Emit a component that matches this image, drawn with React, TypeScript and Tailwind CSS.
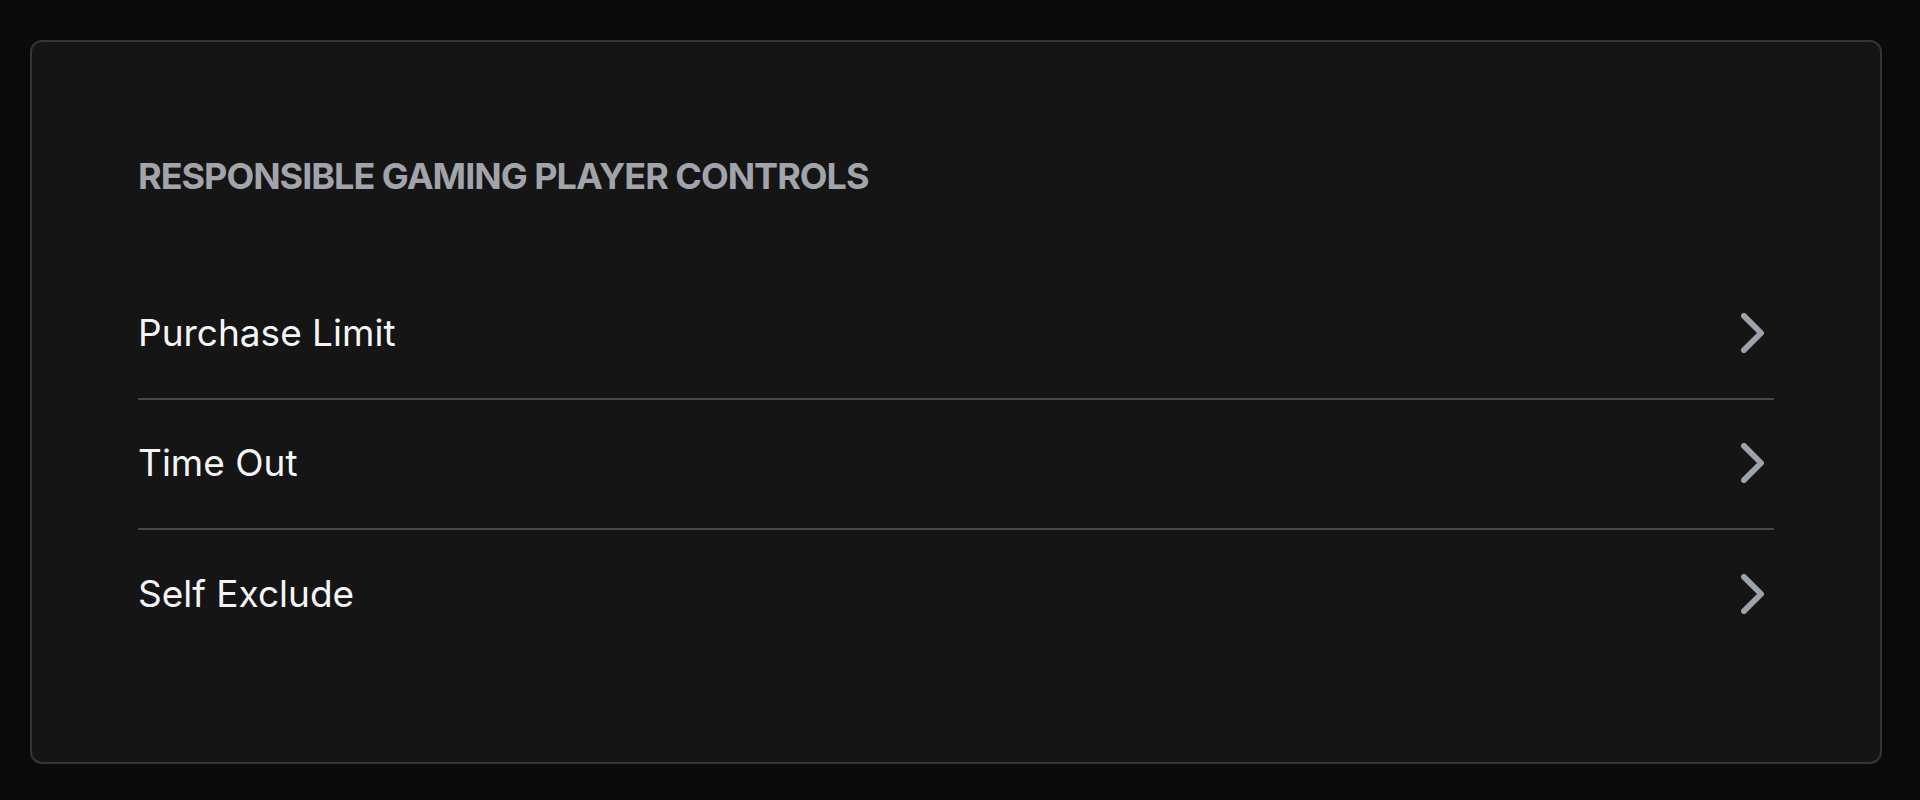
import React from 'react'

const items = ['Purchase Limit', 'Time Out', 'Self Exclude']

const Chevron: React.FC = () => (
  <svg className="w-[23px] h-[40px] shrink-0" viewBox="0 0 8 14" fill="none" aria-hidden="true">
    <path d="M1 1 L7 7 L1 13" stroke="#9ca3af" strokeWidth="2" strokeLinecap="round" strokeLinejoin="round" />
  </svg>
)

const App: React.FC = () => {
  return (
    <div className="min-h-screen w-full bg-[#0a0a0a] pt-[40px] pl-[30px] font-['Inter',sans-serif]">
      <div className="w-[1852px] rounded-[12px] border-2 border-[#353537] bg-[#151515] px-[106px] pt-[114px] pb-[104px]">
        {/* Titulo da secao */}
        <h2 className="text-[36px] leading-[40px] font-bold uppercase tracking-[-1px] text-[#a1a4ab]">
          Responsible Gaming Player Controls
        </h2>

        <ul className="mt-[74px] flex flex-col">
          {items.map((label, i) => (
            <li
              key={label}
              className={
                i < items.length - 1
                  ? 'flex h-[130px] items-center justify-between border-b-2 border-[#4a4a4d] pb-[2px] pr-[10px]'
                  : 'flex h-[128px] items-center justify-between pr-[10px]'
              }
            >
              <span className="text-[37px] leading-[40px] text-[#f5f5f5]">{label}</span>
              <Chevron />
            </li>
          ))}
        </ul>
      </div>
    </div>
  )
}

export default App
